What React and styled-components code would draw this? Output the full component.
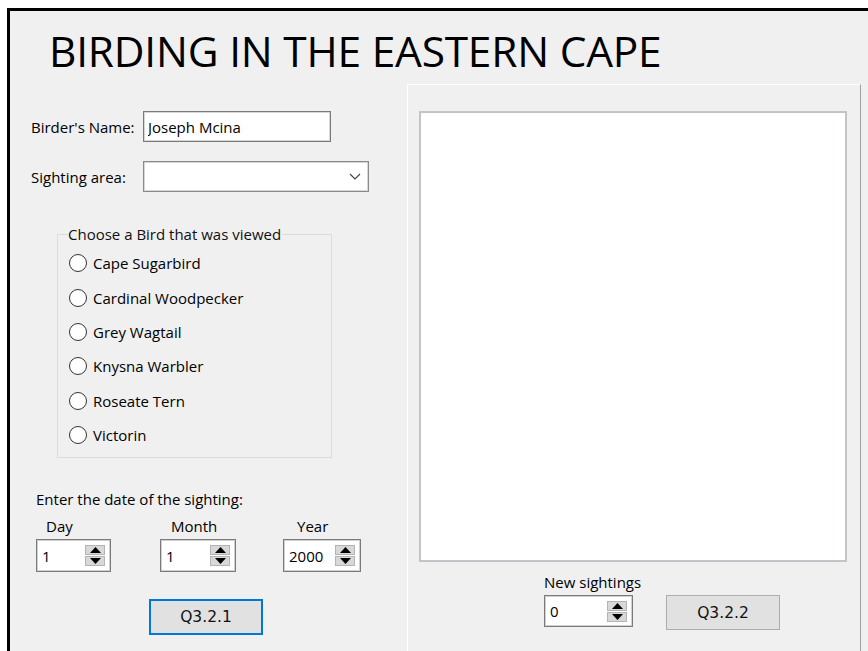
import React, { useState } from 'react';
import styled, { createGlobalStyle } from 'styled-components';

const GlobalStyle = createGlobalStyle`
  html, body {
    margin: 0;
    padding: 0;
    background: #ffffff;
    overflow: hidden;
  }
  body {
    font-family: "Open Sans", "Noto Sans", sans-serif;
    font-size: 15px;
    color: #000;
  }
`;

const Window = styled.div`
  margin: 8px 0 0 7px;
  width: 880px;
  height: 660px;
  border-top: 3px solid #000;
  border-left: 3px solid #000;
  background: #f0f0f0;
  box-sizing: border-box;
`;

const Title = styled.h1`
  margin: 0;
  padding: 14px 0 0 39px;
  height: 73px;
  box-sizing: border-box;
  font-size: 42.4px;
  font-weight: 400;
  line-height: 52px;
  letter-spacing: -0.2px;
`;

const Body = styled.div`
  display: grid;
  grid-template-columns: 397px 454px;
`;

const LeftColumn = styled.div`
  display: flex;
  flex-direction: column;
  padding-top: 27px;
`;

const FieldRow = styled.div`
  display: flex;
  align-items: center;
  padding-left: 21px;
  margin-bottom: ${p => p.$gap || 0}px;
`;

const FieldLabel = styled.label`
  width: 112px;
  white-space: nowrap;
`;

const TextInput = styled.input`
  width: 188px;
  height: 31px;
  box-sizing: border-box;
  border: 1px solid #7a7a7a;
  box-shadow: inset 0 0 0 1px #d6d6d6;
  background: #fff;
  padding: 0 4px;
  font: inherit;
  outline: none;
`;

const Combo = styled.div`
  width: 226px;
  height: 31px;
  box-sizing: border-box;
  border: 1px solid #8a8a8a;
  box-shadow: inset 0 0 0 1px #d6d6d6;
  background: #fff;
  display: flex;
  align-items: center;
  justify-content: flex-end;
  padding-right: 7px;
`;

const GroupBox = styled.fieldset`
  margin: 33px 0 0 47px;
  width: 275px;
  box-sizing: border-box;
  border: 1px solid #dcdcdc;
  padding: 3px 10px 5px 10px;
  min-width: 0;
`;

const GroupCaption = styled.legend`
  padding: 0 1px 0 0;
  line-height: 18px;
  color: #111;
`;

const RadioRow = styled.label`
  display: flex;
  align-items: center;
  height: 34.4px;
  gap: 6px;
  cursor: pointer;
`;

const RadioCircle = styled.span`
  width: 18px;
  height: 18px;
  margin-left: 1px;
  box-sizing: border-box;
  border-radius: 50%;
  border: 1.5px solid #333;
  background: ${p => (p.$checked ? 'radial-gradient(circle, #222 0 3.5px, #fff 4px)' : '#fff')};
  flex-shrink: 0;
`;

const DateHeading = styled.div`
  margin: 31px 0 0 26px;
  line-height: 20px;
`;

const DateGrid = styled.div`
  display: grid;
  grid-template-columns: 124px 123px 90px;
  margin: 7px 0 0 26px;
`;

const DateCell = styled.div`
  display: flex;
  flex-direction: column;
`;

const SmallLabel = styled.div`
  line-height: 20px;
  white-space: nowrap;
  padding-left: ${p => p.$indent || 0}px;
  margin-bottom: ${p => p.$below ?? 3}px;
`;

const SpinBox = styled.div`
  display: flex;
  align-items: center;
  justify-content: space-between;
  width: ${p => p.$width}px;
  height: ${p => p.$height || 33}px;
  box-sizing: border-box;
  border: 1px solid #7a7a7a;
  box-shadow: inset 0 0 0 1px #d0d0d0;
  background: #fff;
  padding: 0 5px 0 5px;
`;

const SpinValue = styled.span`
  line-height: 20px;
`;

const SpinButtons = styled.div`
  display: flex;
  flex-direction: column;
  gap: 1px;
`;

const SpinButton = styled.button`
  width: 20px;
  height: 10px;
  padding: 0;
  border: 1px solid #b4b4b4;
  background: #d8d8d8;
  display: flex;
  align-items: center;
  justify-content: center;
  cursor: pointer;
`;

const ButtonRow = styled.div`
  display: flex;
  margin: 27px 0 0 139px;
`;

const PushButton = styled.button`
  width: ${p => p.$width || 114}px;
  height: ${p => p.$height || 36}px;
  box-sizing: border-box;
  background: #e1e1e1;
  border: ${p => (p.$focused ? '2px solid #0078d7' : '1px solid #adadad')};
  font-family: "DejaVu Sans", sans-serif;
  font-size: 15.5px;
  color: #111;
  cursor: pointer;
`;

const RightPanel = styled.div`
  height: 580px;
  box-sizing: border-box;
  border-top: 1px solid #fff;
  border-left: 1px solid #fff;
  border-right: 1px solid #a0a0a0;
  padding: 26px 0 0 11px;
`;

const ListBox = styled.div`
  width: 428px;
  height: 451px;
  box-sizing: border-box;
  background: #fff;
  border: 2px solid #c3c3ca;
`;

const SightingsArea = styled.div`
  display: grid;
  grid-template-columns: 89px 114px;
  column-gap: 33px;
  align-items: start;
  margin: 10px 0 0 125px;
`;

const Arrow = ({ up }) => (
  <svg width="11" height="6" viewBox="0 0 11 6">
    <path d={up ? 'M0 6 L5.5 0 L11 6 Z' : 'M0 0 L5.5 6 L11 0 Z'} fill="#000" />
  </svg>
);

const Spinner = ({ value, width, height, onChange }) => (
  <SpinBox $width={width} $height={height}>
    <SpinValue>{value}</SpinValue>
    <SpinButtons>
      <SpinButton onClick={() => onChange(value + 1)}><Arrow up /></SpinButton>
      <SpinButton onClick={() => onChange(Math.max(0, value - 1))}><Arrow /></SpinButton>
    </SpinButtons>
  </SpinBox>
);

const birds = [
  'Cape Sugarbird',
  'Cardinal Woodpecker',
  'Grey Wagtail',
  'Knysna Warbler',
  'Roseate Tern',
  'Victorin'
];

export default function App() {
  const [name, setName] = useState('Joseph Mcina');
  const [bird, setBird] = useState(null);
  const [day, setDay] = useState(1);
  const [month, setMonth] = useState(1);
  const [year, setYear] = useState(2000);
  const [sightings, setSightings] = useState(0);

  return (
    <>
      <GlobalStyle />
      <Window>
        <Title>BIRDING IN THE EASTERN CAPE</Title>
        <Body>
          <LeftColumn>
            <FieldRow $gap={19}>
              <FieldLabel>Birder's Name:</FieldLabel>
              <TextInput value={name} onChange={e => setName(e.target.value)} />
            </FieldRow>
            <FieldRow>
              <FieldLabel>Sighting area:</FieldLabel>
              <Combo>
                <svg width="12" height="7" viewBox="0 0 12 7">
                  <path d="M1 1 L6 6 L11 1" fill="none" stroke="#444" strokeWidth="1.2" />
                </svg>
              </Combo>
            </FieldRow>

            <GroupBox>
              <GroupCaption>Choose a Bird that was viewed</GroupCaption>
              {birds.map(b => (
                <RadioRow key={b} onClick={() => setBird(b)}>
                  <RadioCircle $checked={bird === b} />
                  {b}
                </RadioRow>
              ))}
            </GroupBox>

            <DateHeading>Enter the date of the sighting:</DateHeading>
            <DateGrid>
              <DateCell>
                <SmallLabel $indent={10}>Day</SmallLabel>
                <Spinner value={day} width={75} onChange={setDay} />
              </DateCell>
              <DateCell>
                <SmallLabel $indent={11}>Month</SmallLabel>
                <Spinner value={month} width={76} onChange={setMonth} />
              </DateCell>
              <DateCell>
                <SmallLabel $indent={14}>Year</SmallLabel>
                <Spinner value={year} width={78} onChange={setYear} />
              </DateCell>
            </DateGrid>

            <ButtonRow>
              <PushButton $focused>Q3.2.1</PushButton>
            </ButtonRow>
          </LeftColumn>

          <RightPanel>
            <ListBox />
            <SightingsArea>
              <div>
                <SmallLabel $below={3}>New sightings</SmallLabel>
                <Spinner value={sightings} width={89} height={32} onChange={setSightings} />
              </div>
              <div>
                <SmallLabel $below={3}>&nbsp;</SmallLabel>
                <PushButton $width={114} $height={35}>Q3.2.2</PushButton>
              </div>
            </SightingsArea>
          </RightPanel>
        </Body>
      </Window>
    </>
  );
}
